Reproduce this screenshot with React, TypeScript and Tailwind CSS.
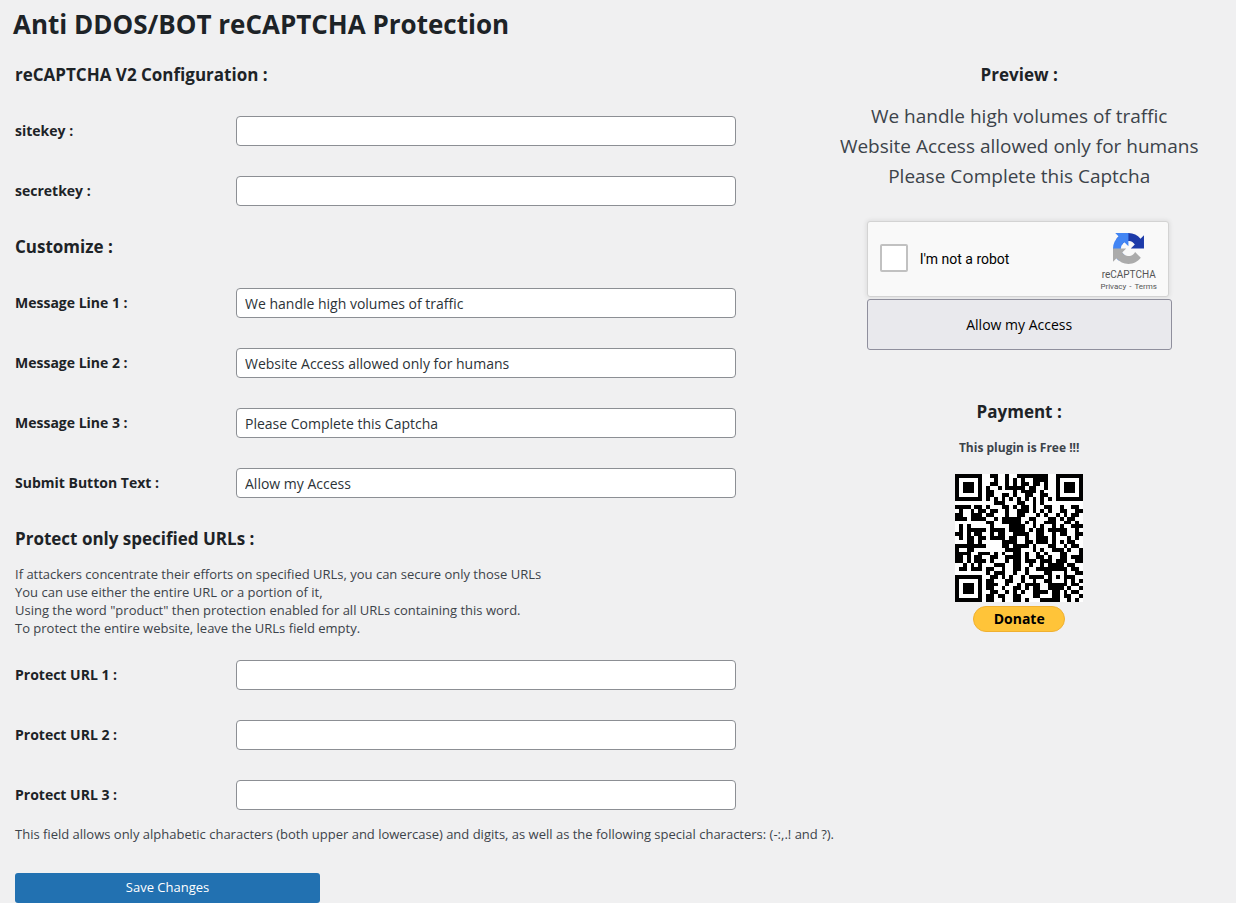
import type { ReactNode } from "react";

const QR_ROWS = [
  "#######..##..#..########..#######",
  "#.....#...#..#.#.#..####..#.....#",
  "#.###.#..##..#.#.##.##.#..#.###.#",
  "#.###.#.#..#.#####.##..#..#.###.#",
  "#.###.#.##.....#.####.#...#.###.#",
  "#.....#.##..##.#..##..##..#.....#",
  "#######.#.#.#.#.#.#.#.#.#.#######",
  "..........###...##..#.#..........",
  "####.##.#...##.#.##.#..##..#..##.",
  ".#..#.##.##..#..###.#.#.#..##..##",
  "##..###.##...#..##...#.#..#.#.##.",
  "###.####..#.#####..##...##.#.##..",
  "........##..#####.#.#..###..##.#.",
  ".#.#.....#....####..#.#..#.#..###",
  ".#.#####.####.####.#.##.#####..#.",
  "##.#.##..#.##..####..##..#.##..##",
  ".#.##.##.####.##..#..###.#...#.#.",
  "...##.#.....####..##.###.#.#.##..",
  "########....##.####.#...##..#.##.",
  "#..##........####...#.#..###.#..#",
  "####..###.#.#..##.#..#.#...##...#",
  "##.#.##..##..####.#..##.#..##.###",
  "##.#.###.#...#.##.###.###.###..##",
  "..#.#.#...###..##..#..#.####.##..",
  ".##.###.##..#..##.#..########.##.",
  "........#.###..#..#....##...#..##",
  "#######..##.#.#..#.####.#.#.###..",
  "#.....#.##...##..#..#..##...#.#.#",
  "#.###.#.###..#..#.####..#####.##.",
  "#.###.#.##..#..##.#.##..####.#..#",
  "#.###.#..##..#.#.#..####.##.#.##.",
  "#.....#.##.##..##...##...##.##..#",
  "#######.##..#..##.#...#####..#.#.",
];

function QrCode() {
  const d = QR_ROWS.flatMap((row, y) =>
    [...row].map((c, x) => (c === "#" ? `M${x} ${y}h1v1h-1z` : ""))
  ).join("");
  return (
    <svg
      className="h-32 w-32 bg-white"
      viewBox="0 0 33 33"
      shapeRendering="crispEdges"
      role="img"
      aria-label="Donation QR code"
    >
      <path d={d} fill="#000" />
    </svg>
  );
}

function RecaptchaLogo() {
  return (
    <svg className="h-[31px] w-[31px]" viewBox="0 0 64 64" aria-hidden="true">
      <path
        fill="#1c3aa9"
        d="M64 31.955l-.033-1.37V4.687l-7.16 7.16C50.948 4.674 42.033.093 32.05.093c-10.4 0-19.622 4.96-25.458 12.64l11.736 11.86a15.55 15.55 0 0 1 4.754-5.334c2.05-1.6 4.952-2.906 8.968-2.906.485 0 .86.057 1.135.163 4.976.393 9.288 3.14 11.828 7.124l-8.307 8.307L64 31.953"
      />
      <path
        fill="#4285f4"
        d="M31.862.094l-1.37.033H4.594l7.16 7.16C4.58 13.147 0 22.06 0 32.046c0 10.4 4.96 19.622 12.64 25.458L24.5 45.768a15.55 15.55 0 0 1-5.334-4.754c-1.6-2.05-2.906-4.952-2.906-8.968 0-.485.057-.86.163-1.135.393-4.976 3.14-9.288 7.124-11.828l8.307 8.307L31.86.095"
      />
      <path
        fill="#ababab"
        d="M.001 32.045l.033 1.37v25.898l7.16-7.16c5.86 7.173 14.774 11.754 24.76 11.754 10.4 0 19.622-4.96 25.458-12.64l-11.736-11.86a15.55 15.55 0 0 1-4.754 5.334c-2.05 1.6-4.952 2.906-8.968 2.906-.485 0-.86-.057-1.135-.163-4.976-.393-9.288-3.14-11.828-7.124l8.307-8.307c-10.522.04-22.4.066-27.295-.005"
      />
    </svg>
  );
}

function Heading({ children }: { children: ReactNode }) {
  return (
    <h2 className="flex h-[52px] items-center text-[17px] font-bold text-[#1d2327]">
      {children}
    </h2>
  );
}

function Field({ id, label, value = "" }: { id: string; label: string; value?: string }) {
  return (
    <div className="flex h-[60px] items-center">
      <label htmlFor={id} className="w-[221px] shrink-0 text-sm font-bold text-[#1d2327]">
        {label}
      </label>
      <input
        id={id}
        type="text"
        defaultValue={value}
        className="h-[30px] w-full max-w-[500px] rounded border border-[#8c8f94] bg-white px-2 text-sm text-[#2c3338]"
      />
    </div>
  );
}

function CaptchaBox() {
  return (
    <div className="flex h-[76px] w-[302px] items-center rounded-[3px] border border-[#d3d3d3] bg-[#f9f9f9] shadow-[0_0_4px_1px_rgba(0,0,0,0.08)]">
      <input
        id="robot"
        type="checkbox"
        className="mb-[2px] ml-3 h-7 w-7 appearance-none rounded-xs border-2 border-[#c1c1c1] bg-white"
      />
      <label
        htmlFor="robot"
        className="ml-3 flex-1 text-left font-[Roboto,sans-serif] text-sm text-black"
      >
        I'm not a robot
      </label>
      <div className="mt-[11px] mr-[9px] flex w-[60px] flex-col items-center self-start">
        <RecaptchaLogo />
        <span className="mt-[5px] font-[Roboto,sans-serif] text-[10px] leading-3 text-[#555]">
          reCAPTCHA
        </span>
        <span className="flex gap-[3px] pt-px font-[Roboto,sans-serif] text-[8px] leading-[10px] text-[#555]">
          <a href="#privacy">Privacy</a>
          <span>-</span>
          <a href="#terms">Terms</a>
        </span>
      </div>
    </div>
  );
}

export default function App() {
  return (
    <div className="min-h-screen bg-[#f0f0f1] font-['Open_Sans','Noto_Sans',sans-serif] text-[#3c434a]">
      <h1 className="flex h-[49px] items-center pl-[13px] text-[26px] font-bold text-[#1d2327]">
        Anti DDOS/BOT reCAPTCHA Protection
      </h1>
      <div className="grid grid-cols-[65fr_35fr]">
        <form className="min-w-0 pl-[15px]" onSubmit={(e) => e.preventDefault()}>
          <Heading>reCAPTCHA V2 Configuration :</Heading>
          <Field id="sitekey" label="sitekey :" />
          <Field id="secretkey" label="secretkey :" />

          <Heading>Customize :</Heading>
          <Field id="line1" label="Message Line 1 :" value="We handle high volumes of traffic" />
          <Field id="line2" label="Message Line 2 :" value="Website Access allowed only for humans" />
          <Field id="line3" label="Message Line 3 :" value="Please Complete this Captcha" />
          <Field id="submit-text" label="Submit Button Text :" value="Allow my Access" />

          <Heading>Protect only specified URLs :</Heading>
          <p className="pb-2 text-[13px] leading-[18px]">
            If attackers concentrate their efforts on specified URLs, you can secure only those URLs
            <br />
            You can use either the entire URL or a portion of it,
            <br />
            Using the word "product" then protection enabled for all URLs containing this word.
            <br />
            To protect the entire website, leave the URLs field empty.
          </p>
          <Field id="url1" label="Protect URL 1 :" />
          <Field id="url2" label="Protect URL 2 :" />
          <Field id="url3" label="Protect URL 3 :" />
          <p className="text-[13px] leading-[18px] whitespace-nowrap">
            This field allows only alphabetic characters (both upper and lowercase) and digits, as
            well as the following special characters: (-:,.! and ?).
          </p>
          <button
            type="submit"
            className="mt-[30px] h-[30px] w-[305px] rounded-[3px] bg-[#2271b1] text-[13px] text-white"
          >
            Save Changes
          </button>
        </form>

        <aside className="flex flex-col items-center pr-px text-center">
          <Heading>Preview :</Heading>
          <p className="text-[19px] leading-[30px]">
            We handle high volumes of traffic
            <br />
            Website Access allowed only for humans
            <br />
            Please Complete this Captcha
          </p>
          <div className="mt-[30px] w-[305px]">
            <CaptchaBox />
            <button
              type="button"
              className="mt-[2px] h-[51px] w-full rounded-[3px] border border-[#8f8f9d] bg-[#e9e9ed] text-sm text-black"
            >
              Allow my Access
            </button>
          </div>
          <div className="mt-9 flex flex-col items-center">
            <Heading>Payment :</Heading>
            <p className="mb-4 text-xs leading-5 font-bold">This plugin is Free !!!</p>
            <QrCode />
            <button
              type="button"
              className="mt-1 h-[26px] w-[92px] rounded-full border border-[#f0b030] bg-[#ffc439] text-sm leading-6 font-bold text-black"
            >
              Donate
            </button>
          </div>
        </aside>
      </div>
    </div>
  );
}
